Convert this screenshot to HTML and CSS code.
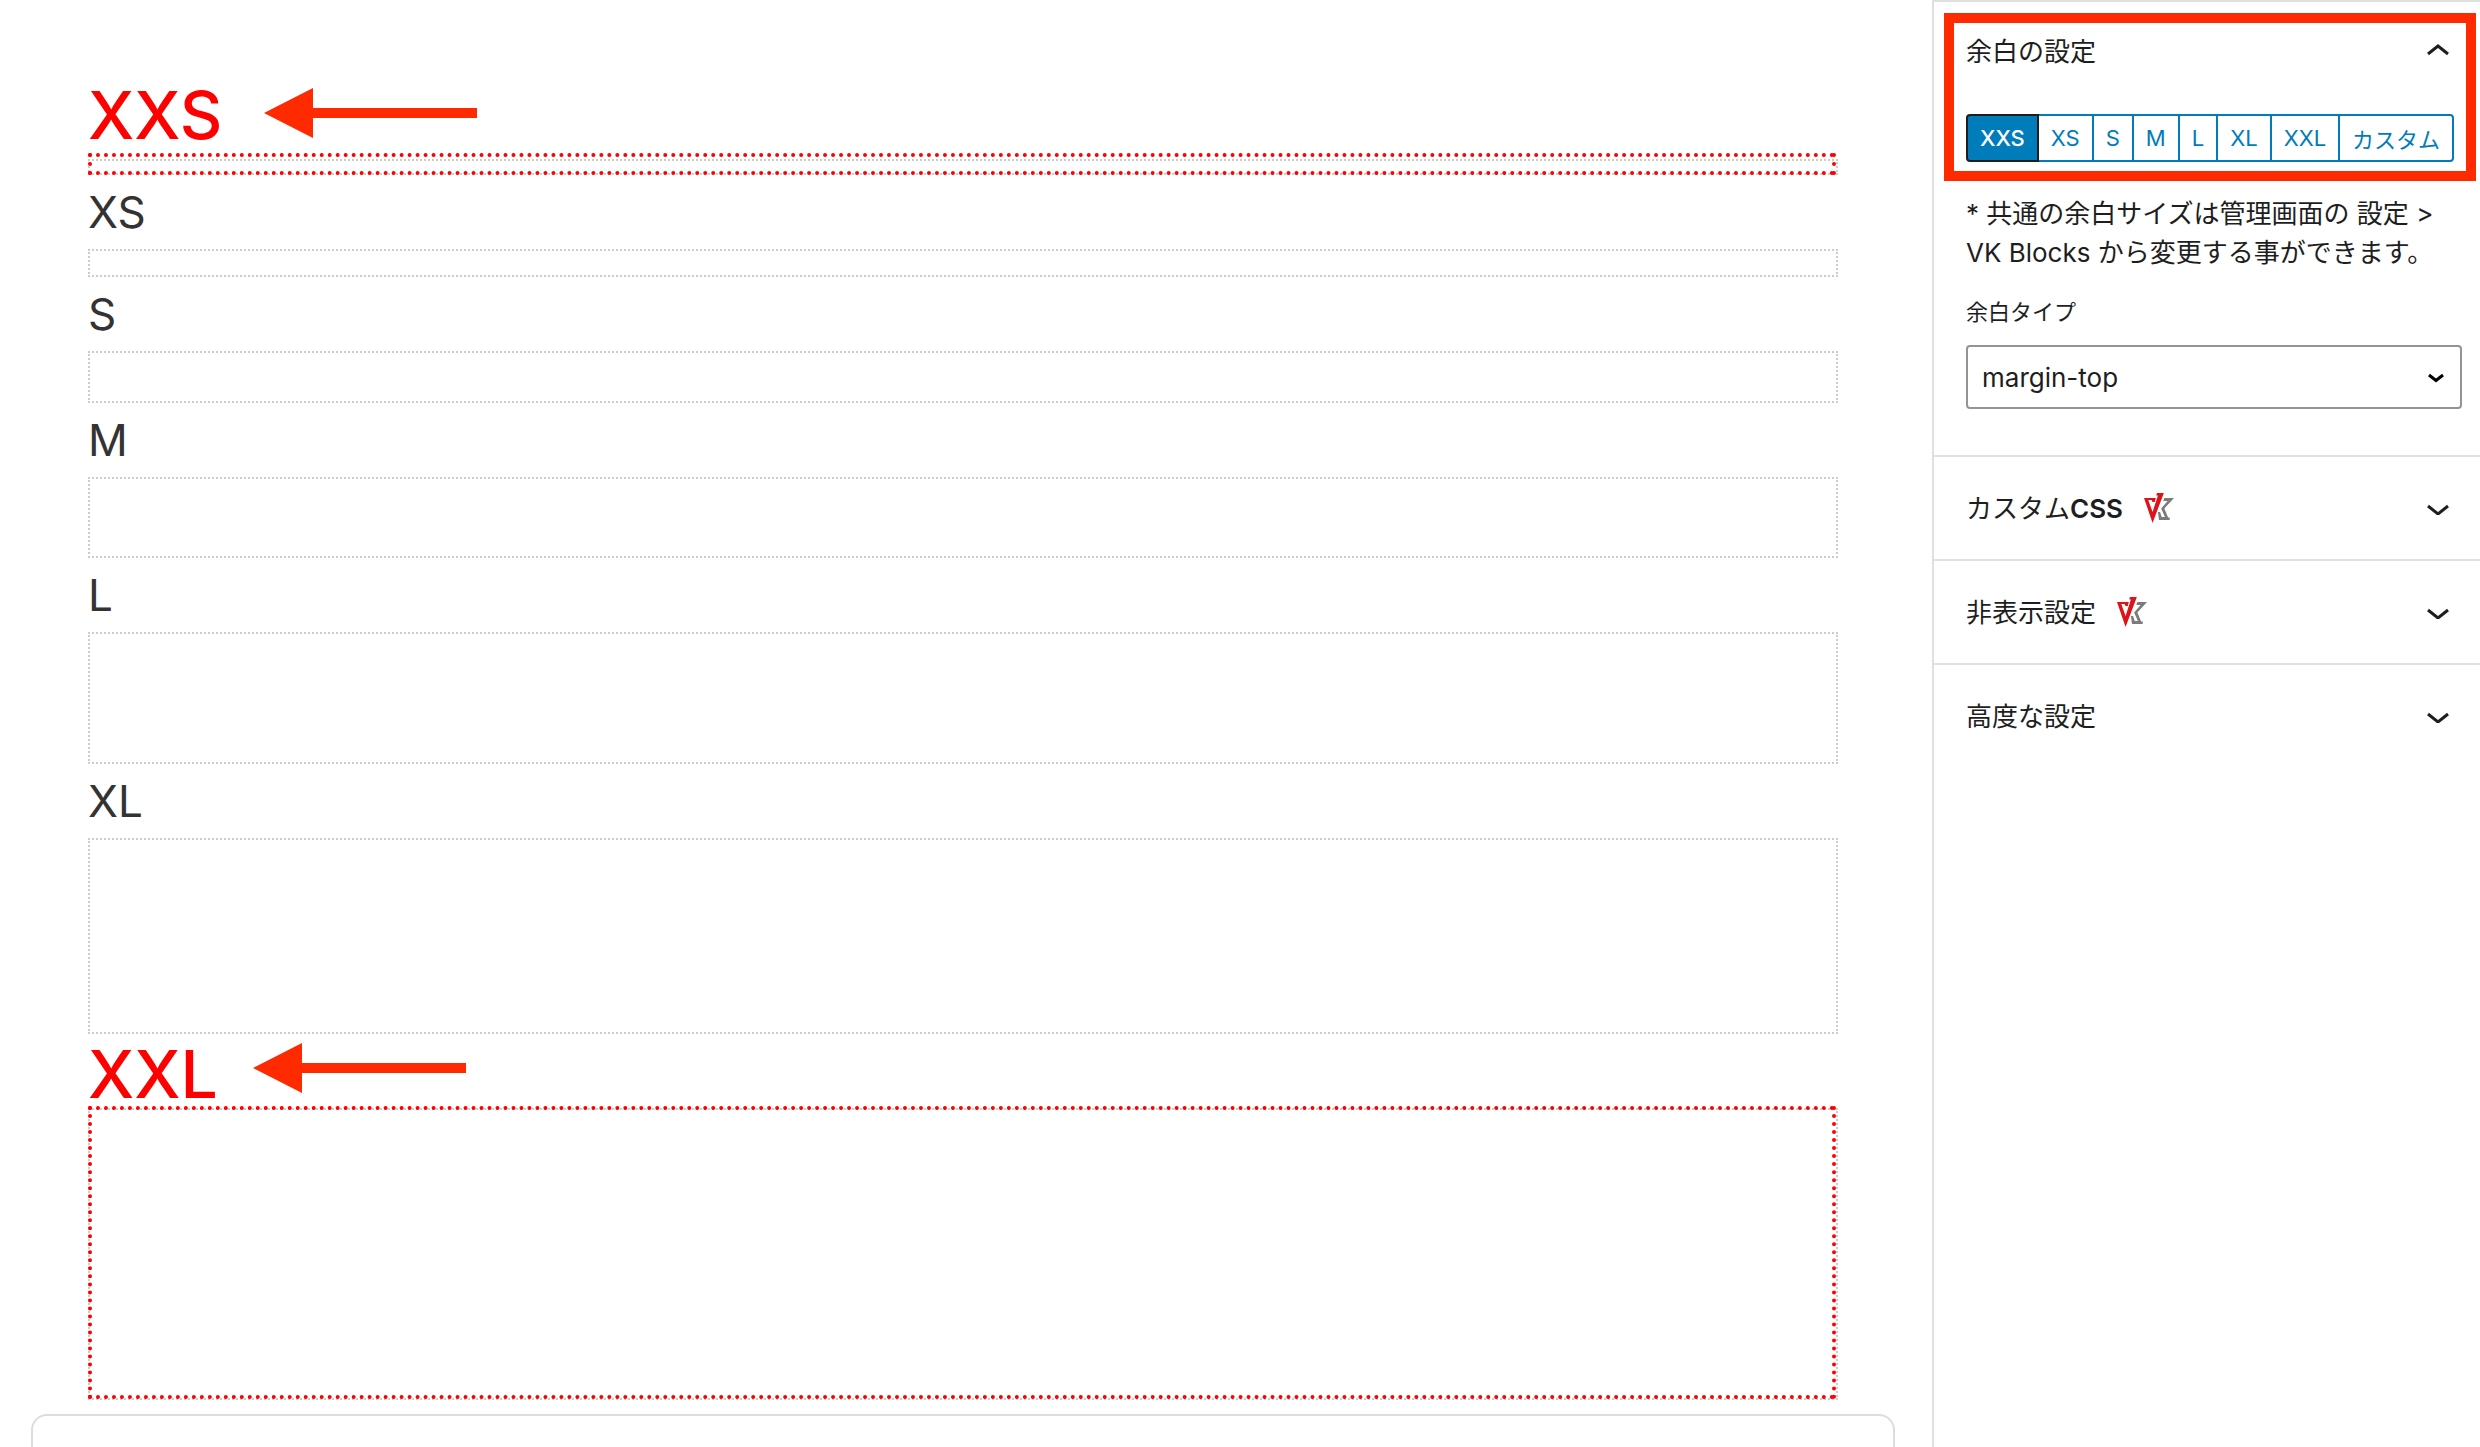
FILE: index.html
```html
<!DOCTYPE html>
<html lang="ja">
<head>
<meta charset="utf-8">
<title>余白の設定</title>
<link rel="stylesheet" href="styles.css">
</head>
<body>
<div class="editor">
  <main class="canvas">
    <div class="blocks">
      <section class="block">
        <div class="heading heading-first">
          <h2 class="size-name marked">XXS</h2>
          <svg class="arrow" viewBox="0 0 213 50" aria-hidden="true"><path d="M0 25 49 0V20H213V30H49V50Z"/></svg>
        </div>
        <div class="spacer spacer-xxs"><div class="outline outline-xxs"></div></div>
      </section>
      <section class="block"><h2 class="size-name">XS</h2><div class="spacer spacer-xs"></div></section>
      <section class="block"><h2 class="size-name">S</h2><div class="spacer spacer-s"></div></section>
      <section class="block"><h2 class="size-name">M</h2><div class="spacer spacer-m"></div></section>
      <section class="block"><h2 class="size-name">L</h2><div class="spacer spacer-l"></div></section>
      <section class="block"><h2 class="size-name">XL</h2><div class="spacer spacer-xl"></div></section>
      <section class="block">
        <div class="heading heading-last">
          <h2 class="size-name marked">XXL</h2>
          <svg class="arrow" viewBox="0 0 213 50" aria-hidden="true"><path d="M0 25 49 0V20H213V30H49V50Z"/></svg>
        </div>
        <div class="spacer spacer-xxl"><div class="outline"></div></div>
      </section>
    </div>
    <div class="card"></div>
  </main>

  <aside class="sidebar">
    <section class="panel">
      <div class="highlight">
        <button type="button" class="panel-title" aria-expanded="true">
          <span>余白の設定</span>
          <svg class="chevron" viewBox="0 0 22 14" aria-hidden="true"><path d="M1 12 11 4 21 12"/></svg>
        </button>
        <div class="button-group" role="group" aria-label="余白サイズ">
          <button type="button" class="size-button primary" aria-pressed="true">XXS</button>
          <button type="button" class="size-button">XS</button>
          <button type="button" class="size-button">S</button>
          <button type="button" class="size-button">M</button>
          <button type="button" class="size-button">L</button>
          <button type="button" class="size-button">XL</button>
          <button type="button" class="size-button">XXL</button>
          <button type="button" class="size-button">カスタム</button>
        </div>
      </div>
      <div class="panel-body">
        <p class="note">* 共通の余白サイズは管理画面の 設定 &gt;<br>VK Blocks から変更する事ができます。</p>
        <label class="label" for="space-type">余白タイプ</label>
        <div class="select-wrap">
          <select id="space-type" class="select"><option>margin-top</option></select>
          <svg class="select-arrow" viewBox="0 0 16 10" aria-hidden="true"><path d="M1 2 8 7.500 15 2"/></svg>
        </div>
      </div>
    </section>
    <section class="panel">
      <button type="button" class="panel-title" aria-expanded="false">
        <span>カスタム<span class="latin">CSS</span></span>
        <svg class="logo" viewBox="0 0 28 30" preserveAspectRatio="none" aria-hidden="true"><path fill="#dd131a" d="M0 5H11L10 9H8L7 7H4L8 19 13 2.500H11.500L12 0H18.500L17.500 3 8 30Z"/><path fill="#7b7b7b" d="M19 5H28L19 15.500 22.500 24.500H24V27H14L13 19H15L16.500 24H19.500L16 15.500 22 8H18Z"/></svg>
        <svg class="chevron" viewBox="0 0 22 14" aria-hidden="true"><path d="M1 5 11 13 21 5"/></svg>
      </button>
    </section>
    <section class="panel">
      <button type="button" class="panel-title" aria-expanded="false">
        <span>非表示設定</span>
        <svg class="logo" viewBox="0 0 28 30" preserveAspectRatio="none" aria-hidden="true"><path fill="#dd131a" d="M0 5H11L10 9H8L7 7H4L8 19 13 2.500H11.500L12 0H18.500L17.500 3 8 30Z"/><path fill="#7b7b7b" d="M19 5H28L19 15.500 22.500 24.500H24V27H14L13 19H15L16.500 24H19.500L16 15.500 22 8H18Z"/></svg>
        <svg class="chevron" viewBox="0 0 22 14" aria-hidden="true"><path d="M1 5 11 13 21 5"/></svg>
      </button>
    </section>
    <section class="panel">
      <button type="button" class="panel-title" aria-expanded="false">
        <span>高度な設定</span>
        <svg class="chevron" viewBox="0 0 22 14" aria-hidden="true"><path d="M1 5 11 13 21 5"/></svg>
      </button>
    </section>
  </aside>
</div>
</body>
</html>
```
FILE: styles.css
```css
* { box-sizing: border-box; }

body {
  margin: 0;
  background: #fff;
  color: #1e1e1e;
  font-family: Inter, "Noto Sans CJK JP", sans-serif;
  font-size: 26px;
}

button, select { font: inherit; color: inherit; }

.editor {
  display: flex;
  height: 100vh;
  overflow: hidden;
}

/* Canvas */
.canvas {
  flex: 1;
  padding: 79px 37px 0 31px;
  overflow: hidden;
  display: flex;
  flex-direction: column;
}

.blocks { padding: 0 57px; }

.heading {
  display: flex;
  align-items: flex-start;
  height: 74px;
}

.heading-first {
  height: 80px;
  gap: 42px;
}

.heading-last { gap: 35px; }

.size-name {
  margin: 0;
  height: 74px;
  color: #333;
  font-size: 44px;
  font-weight: 400;
  line-height: 74px;
}

.marked {
  color: #f00;
  font-size: 66px;
  font-weight: 500;
  line-height: 72px;
}

.heading-last .marked { line-height: 80px; }

.arrow {
  width: 213px;
  height: 50px;
  margin-top: 9px;
  fill: #ff2a00;
}

.spacer {
  position: relative;
  border: 2px dotted #ccc;
}

.spacer-xxs { height: 16px; }
.spacer-xs { height: 28px; }
.spacer-s { height: 52px; }
.spacer-m { height: 81px; }
.spacer-l { height: 132px; }
.spacer-xl { height: 196px; }
.spacer-xxl { height: 292px; }

.outline {
  position: absolute;
  inset: -4px 0 -1px -2px;
  border: 4px dotted #f00;
}

.outline-xxs { inset: -8px 0 -2px -2px; }

.card {
  flex: 1;
  min-height: 60px;
  margin-top: 14px;
  border: 2px solid #dadde2;
  border-bottom: 0;
  border-radius: 16px 16px 0 0;
}

/* Sidebar */
.sidebar {
  width: 548px;
  border-left: 2px solid #e0e0e0;
}

.panel { border-top: 2px solid #e0e0e0; }

.panel-title {
  display: flex;
  align-items: center;
  width: 100%;
  height: 102px;
  padding: 0 31px 4px 32px;
  border: 0;
  background: none;
  text-align: left;
}

.latin { font-weight: 600; }

.chevron {
  width: 22px;
  height: 14px;
  margin-top: 4px;
  margin-left: auto;
  fill: none;
  stroke: #1e1e1e;
  stroke-width: 3;
}

.logo {
  width: 30px;
  height: 30px;
  margin-top: 4px;
  margin-left: 21px;
}

.highlight {
  margin: 11px 4px 0 10px;
  padding: 0 0 9px;
  border: 10px solid #ff2a00;
}

.highlight .panel-title {
  height: 56px;
  padding: 0 17px 4px 12px;
}

.highlight .chevron { margin-top: 0; }

.button-group {
  display: flex;
  padding: 35px 0 0 12px;
}

.size-button {
  height: 48px;
  margin-left: -2px;
  padding: 0 12px;
  border: 2px solid #007cba;
  background: #fff;
  color: #007cba;
  font-size: 22px;
  white-space: nowrap;
}

.size-button:first-child {
  margin-left: 0;
  border-radius: 4px 0 0 4px;
}

.size-button:last-child { border-radius: 0 4px 4px 0; }

.size-button.primary {
  position: relative;
  border-color: #1e1e1e;
  background: #007cba;
  color: #fff;
  font-weight: 500;
}

.panel-body { padding: 13px 18px 46px 32px; }

.note {
  margin: 0 0 24px;
  line-height: 39px;
  white-space: nowrap;
}

.label {
  display: block;
  margin-bottom: 17px;
  font-size: 22px;
  line-height: 32px;
}

.select-wrap { position: relative; }

.select {
  display: block;
  width: 100%;
  height: 64px;
  padding: 0 14px;
  border: 2px solid #949494;
  border-radius: 4px;
  background: #fff;
  appearance: none;
}

.select-arrow {
  position: absolute;
  top: 28px;
  right: 18px;
  width: 16px;
  height: 10px;
  fill: none;
  stroke: #000;
  stroke-width: 3;
  pointer-events: none;
}
```
